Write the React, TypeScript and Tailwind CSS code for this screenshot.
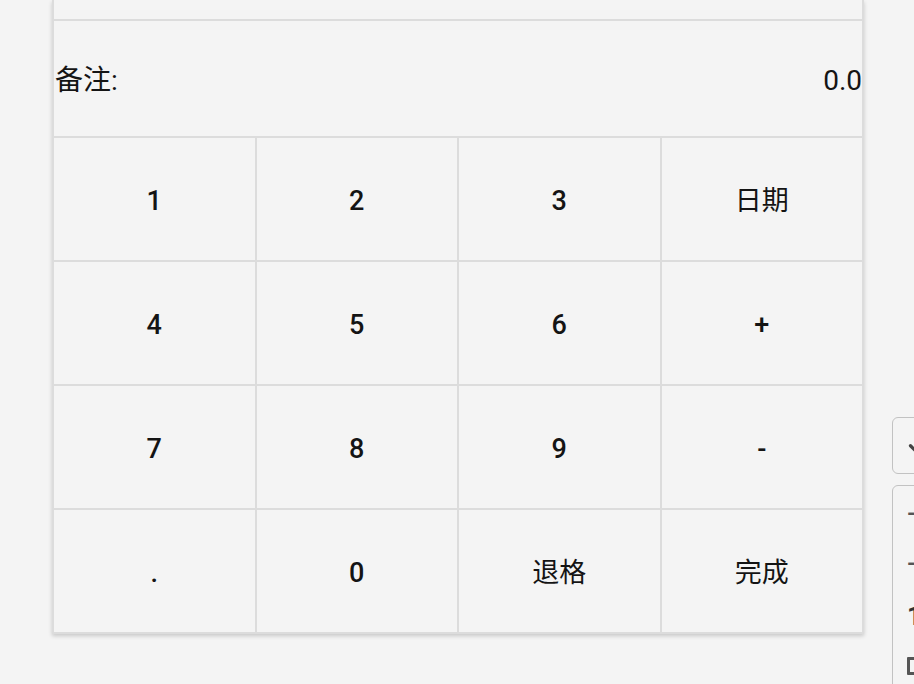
import { ChevronDown } from 'lucide-react';

const keys = ['1', '2', '3', '日期', '4', '5', '6', '+', '7', '8', '9', '-', '.', '0', '退格', '完成'];

// CJK labels are drawn in regular weight, digits and signs in medium
const isWord = (k: string) => /[^\x00-\x7f]/.test(k);

export default function App() {
  return (
    <div
      className="relative w-[914px] h-[684px] overflow-hidden bg-[#f4f4f4] text-[#141414]"
      style={{ fontFamily: "Roboto, 'Noto Sans CJK SC', sans-serif" }}
    >
      <div className="pl-[52px]">
        <div className="w-[812px] bg-[#dcdcdc] px-[2px] pb-[2px] shadow-[0_2px_4px_rgba(0,0,0,0.18)]">
          {/* row above, scrolled out of view */}
          <div className="h-[19px] bg-[#f4f4f4]" />
          {/* remark */}
          <div className="mt-[2px] h-[115px] pt-[4px] bg-[#f4f4f4] flex items-center justify-between text-[28px] leading-none">
            <span className="pl-[1px]">备注:</span>
            <span>0.0</span>
          </div>
          {/* keypad */}
          <div className="mt-[2px] grid grid-cols-4 gap-[2px]">
            {keys.map((k) => (
              <button
                key={k}
                className={`h-[122px] pt-[5px] bg-[#f4f4f4] flex items-center justify-center text-[27px] leading-none ${
                  isWord(k) ? 'font-normal' : 'font-medium'
                }`}
              >
                {k}
              </button>
            ))}
          </div>
        </div>
      </div>

      {/* floating side toolbar, cut off at the window edge */}
      <div className="absolute left-[892px] top-[417px] w-[40px] flex flex-col gap-[11px]">
        <div className="h-[57px] rounded-[6px] border border-[#c2c2c2] bg-[#f4f4f4] flex items-center pl-[11px] pt-[6px]">
          <ChevronDown size={26} strokeWidth={3} className="text-[#444]" />
        </div>
        <div className="h-[260px] rounded-[6px] border border-[#c2c2c2] bg-[#f4f4f4] flex flex-col pl-[14px] pt-[17px] gap-[28px] text-[#555] font-bold text-[22px] leading-none">
          <span>-</span>
          <span>-</span>
          <span className="text-[#333] text-[26px]">1</span>
          <span className="w-[16px] h-[18px] border-[3px] border-[#555] rounded-[1px]" />
        </div>
      </div>
    </div>
  );
}
